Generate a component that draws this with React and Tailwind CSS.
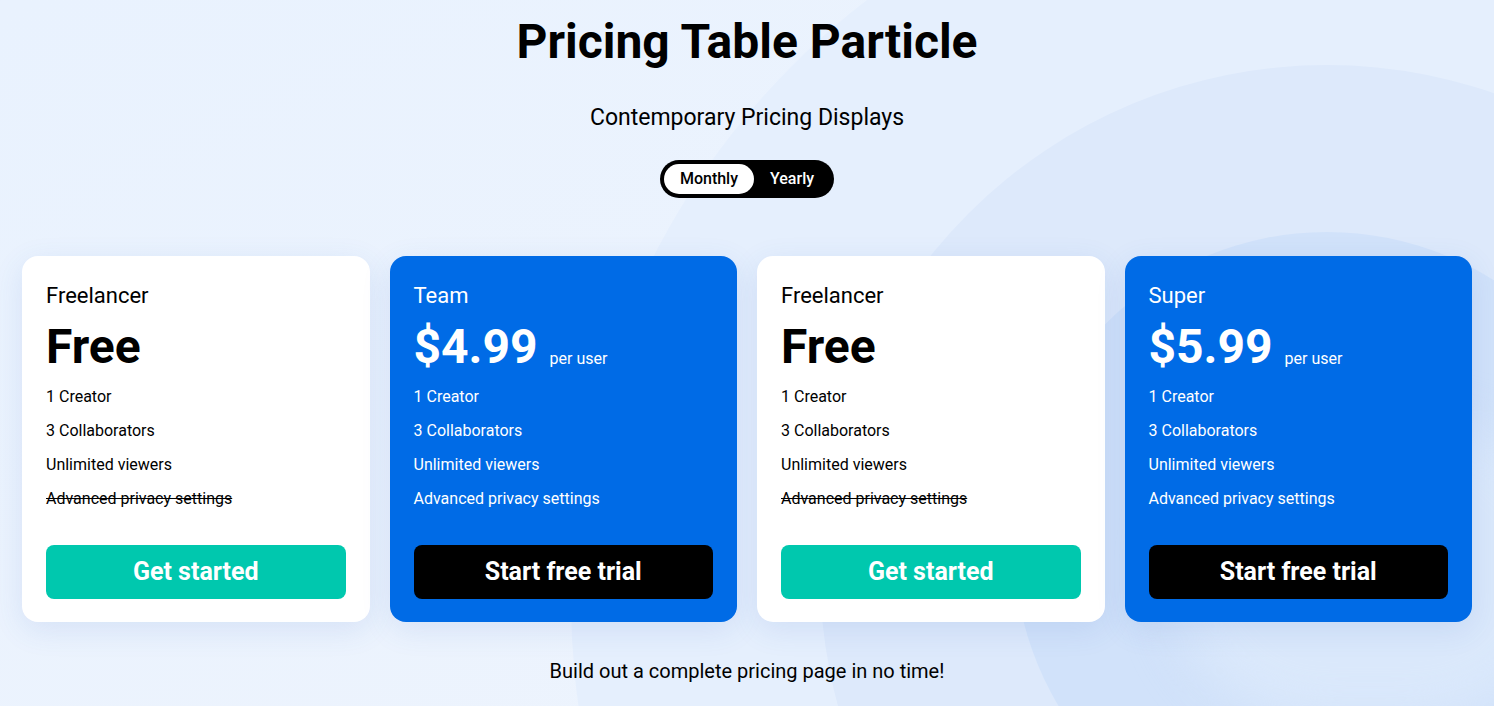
const plans = [
  { name: 'Freelancer', price: 'Free', dark: false },
  { name: 'Team', price: '$4.99', dark: true },
  { name: 'Freelancer', price: 'Free', dark: false },
  { name: 'Super', price: '$5.99', dark: true }
]

const features = ['1 Creator', '3 Collaborators', 'Unlimited viewers']

function PlanCard({ plan }) {
  const { name, price, dark } = plan
  return (
    <div
      className={`flex flex-col rounded-2xl px-6 pt-[26px] pb-[23px] shadow-[0_8px_30px_rgba(60,110,200,0.12)] ${
        dark ? 'bg-[#006be6] text-white' : 'bg-white text-black'
      }`}
    >
      <div className="text-[22px] leading-[28px]">{name}</div>
      <div className="flex items-end gap-3 mt-[9px]">
        <span className="text-[48px] font-bold leading-[56px]">{price}</span>
        {dark && <span className="text-[16px] mb-[4px]">per user</span>}
      </div>
      <ul className="mt-[5px] flex flex-col text-[16px]">
        {features.map((f) => (
          <li key={f} className="h-[34px] leading-[34px]">{f}</li>
        ))}
        <li className={`h-[34px] leading-[34px] ${dark ? '' : 'line-through'}`}>
          Advanced privacy settings
        </li>
      </ul>
      <button
        className={`mt-[29px] h-[54px] rounded-lg text-[25px] font-bold text-white ${
          dark ? 'bg-black' : 'bg-[#00c8ae]'
        }`}
      >
        {dark ? 'Start free trial' : 'Get started'}
      </button>
    </div>
  )
}

export default function App() {
  return (
    <div
      className="relative min-h-[706px] overflow-hidden bg-gradient-to-br from-[#e9f2fe] to-[#eef4fd] text-black"
      style={{ fontFamily: 'Roboto, "Liberation Sans", sans-serif' }}
    >
      {/* decorative circles */}
      <div className="absolute left-[571px] top-[-156px] h-[1512px] w-[1512px] rounded-full bg-[#e5effd]" />
      <div className="absolute left-[820px] top-[65px] h-[1014px] w-[1014px] rounded-full bg-[#dde9fb]" />
      <div className="absolute left-[1014px] top-[232px] h-[626px] w-[626px] rounded-full bg-[#d1e2fa]" />
      <div className="absolute left-[1170px] top-[420px] h-[300px] w-[400px] rounded-full bg-[#dae8fb] blur-xl" />

      <div className="relative flex flex-col items-center">
        <h1 className="mt-[14px] text-[48px] font-bold leading-[56px]">Pricing Table Particle</h1>
        <p className="mt-[34px] text-[23px] leading-[28px]">Contemporary Pricing Displays</p>
        <div className="mt-[28px] flex h-[38px] items-center rounded-full bg-black p-[4px] text-[16px] font-medium">
          <span className="flex h-full items-center rounded-full bg-white px-4">Monthly</span>
          <span className="flex h-full items-center px-4 text-white">Yearly</span>
        </div>

        <div className="mt-[58px] grid w-full grid-cols-4 gap-5 px-[22px]">
          {plans.map((p, i) => (
            <PlanCard key={i} plan={p} />
          ))}
        </div>

        <p className="mt-[36px] text-[20px] leading-[26px]">Build out a complete pricing page in no time!</p>
      </div>
    </div>
  )
}
